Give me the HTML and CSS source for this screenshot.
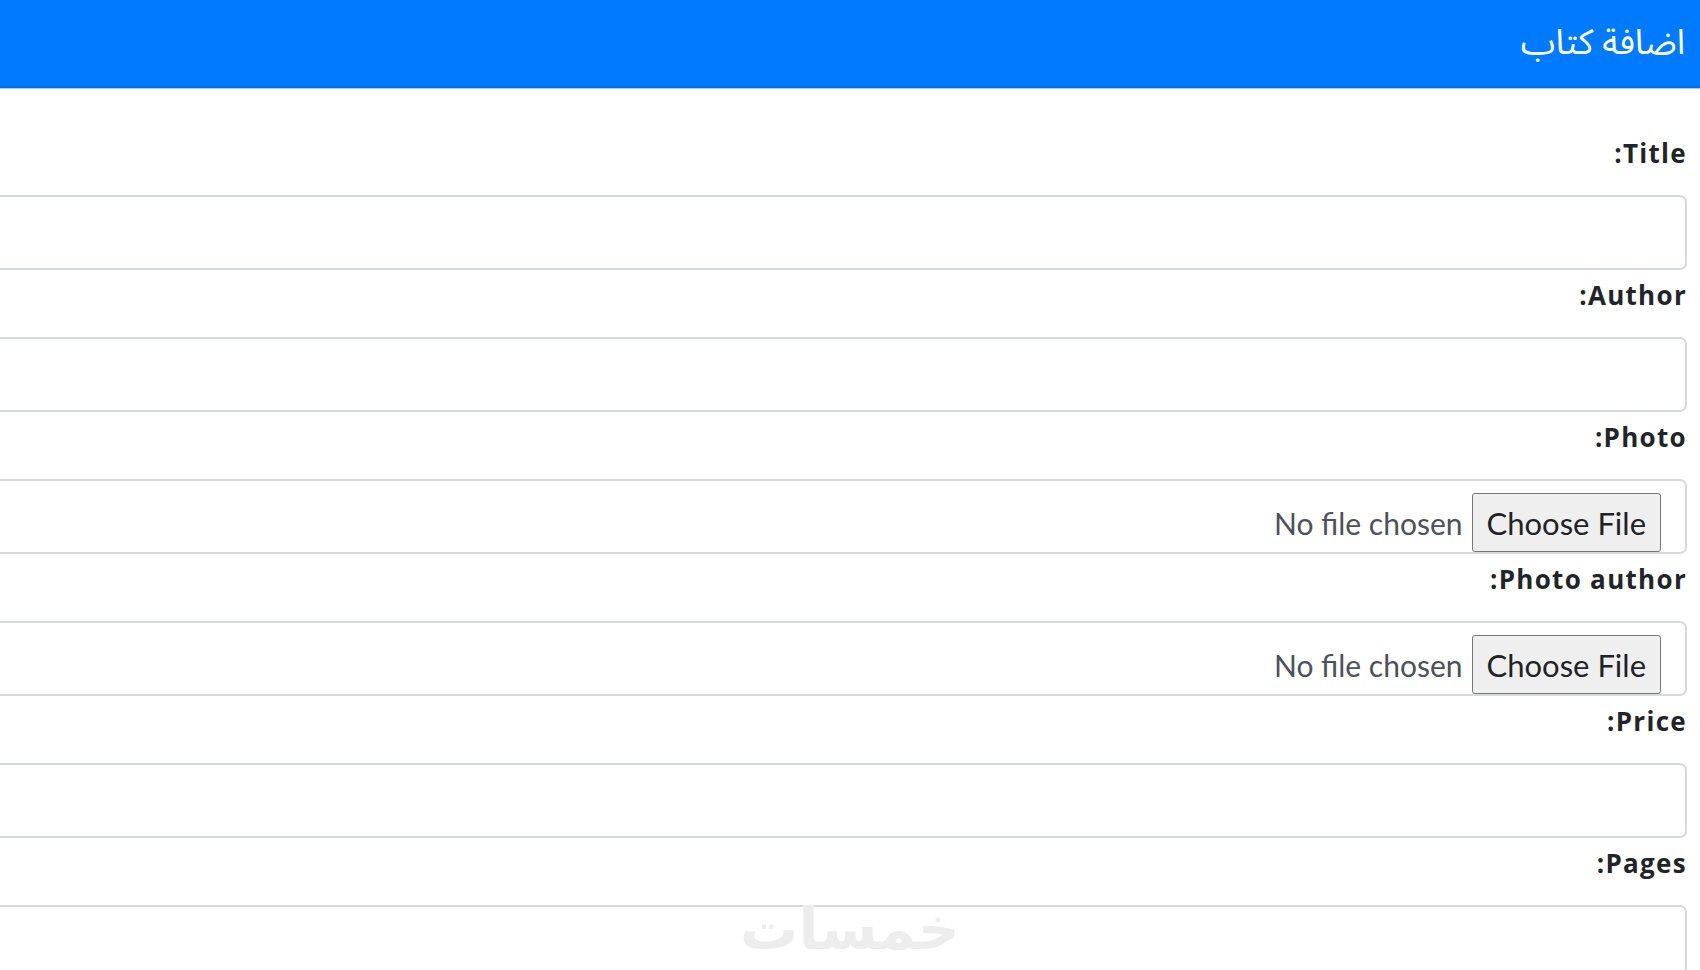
FILE: index.html
```html
<!DOCTYPE html>
<html lang="ar" dir="rtl">
<head>
<meta charset="utf-8">
<title>اضافة كتاب</title>
<link rel="stylesheet" href="styles.css">
</head>
<body>
<header class="topbar">
  <h1 class="topbar-title">اضافة كتاب</h1>
</header>
<form class="book-form">
  <div class="field">
    <label class="field-label" for="title">Title:</label>
    <input class="field-input" type="text" id="title">
  </div>
  <div class="field">
    <label class="field-label" for="author">Author:</label>
    <input class="field-input" type="text" id="author">
  </div>
  <div class="field">
    <label class="field-label" for="photo">Photo:</label>
    <input class="field-input field-file" type="file" id="photo">
  </div>
  <div class="field">
    <label class="field-label" for="photo-author">Photo author:</label>
    <input class="field-input field-file" type="file" id="photo-author">
  </div>
  <div class="field">
    <label class="field-label" for="price">Price:</label>
    <input class="field-input" type="text" id="price">
  </div>
  <div class="field">
    <label class="field-label" for="pages">Pages:</label>
    <input class="field-input" type="text" id="pages">
  </div>
</form>
<div class="watermark">خمسات</div>
</body>
</html>
```

FILE: styles.css
```css
html, body {
  margin: 0;
  padding: 0;
  height: 100%;
  overflow: hidden;
  background: #ffffff;
}

body {
  font-family: "Open Sans", "DejaVu Sans", sans-serif;
  color: #212529;
  direction: rtl;
}

.topbar {
  height: 86px;
  background: #007bff;
  border-bottom: 2px solid #0a6ee0;
  box-shadow: 0 1px 0 #a8c9f0;
  display: flex;
  align-items: center;
  padding: 0 15px;
}

.topbar-title {
  margin: 0;
  font-family: "Noto Sans Arabic", "DejaVu Sans", sans-serif;
  font-weight: 400;
  font-size: 35px;
  line-height: 44px;
  color: #ffffff;
}

.book-form {
  display: flex;
  flex-direction: column;
  padding: 40px 13px 0 0;
}

.field {
  display: flex;
  flex-direction: column;
}

.field-label {
  margin: 9px 0 26px 0;
  font-family: "Open Sans", sans-serif;
  font-weight: 700;
  font-size: 26px;
  line-height: 32px;
  letter-spacing: 1.3px;
  color: #212529;
}

.field-input {
  box-sizing: border-box;
  display: block;
  width: 100%;
  height: 75px;
  margin: 0;
  border: 2px solid #d6dadf;
  border-left: none;
  border-radius: 0 7px 7px 0;
  background: #ffffff;
  outline: none;
}

.field-file {
  padding: 12px 24px 0 0;
  font-family: "Lato", sans-serif;
  font-size: 30px;
  color: #4b5259;
  direction: rtl;
}

.field-file::file-selector-button {
  box-sizing: border-box;
  height: 59px;
  margin: 0 0 0 9px;
  padding: 0 14px;
  border: 1px solid #767676;
  border-radius: 3px;
  background: #efefef;
  font-family: "Lato", sans-serif;
  font-size: 31px;
  color: #1f2226;
}

.watermark {
  position: fixed;
  left: 50%;
  bottom: 6px;
  transform: translateX(-50%);
  font-family: "DejaVu Sans", sans-serif;
  font-weight: 700;
  font-size: 58px;
  line-height: 70px;
  color: #ededed;
  direction: rtl;
  pointer-events: none;
}
```
